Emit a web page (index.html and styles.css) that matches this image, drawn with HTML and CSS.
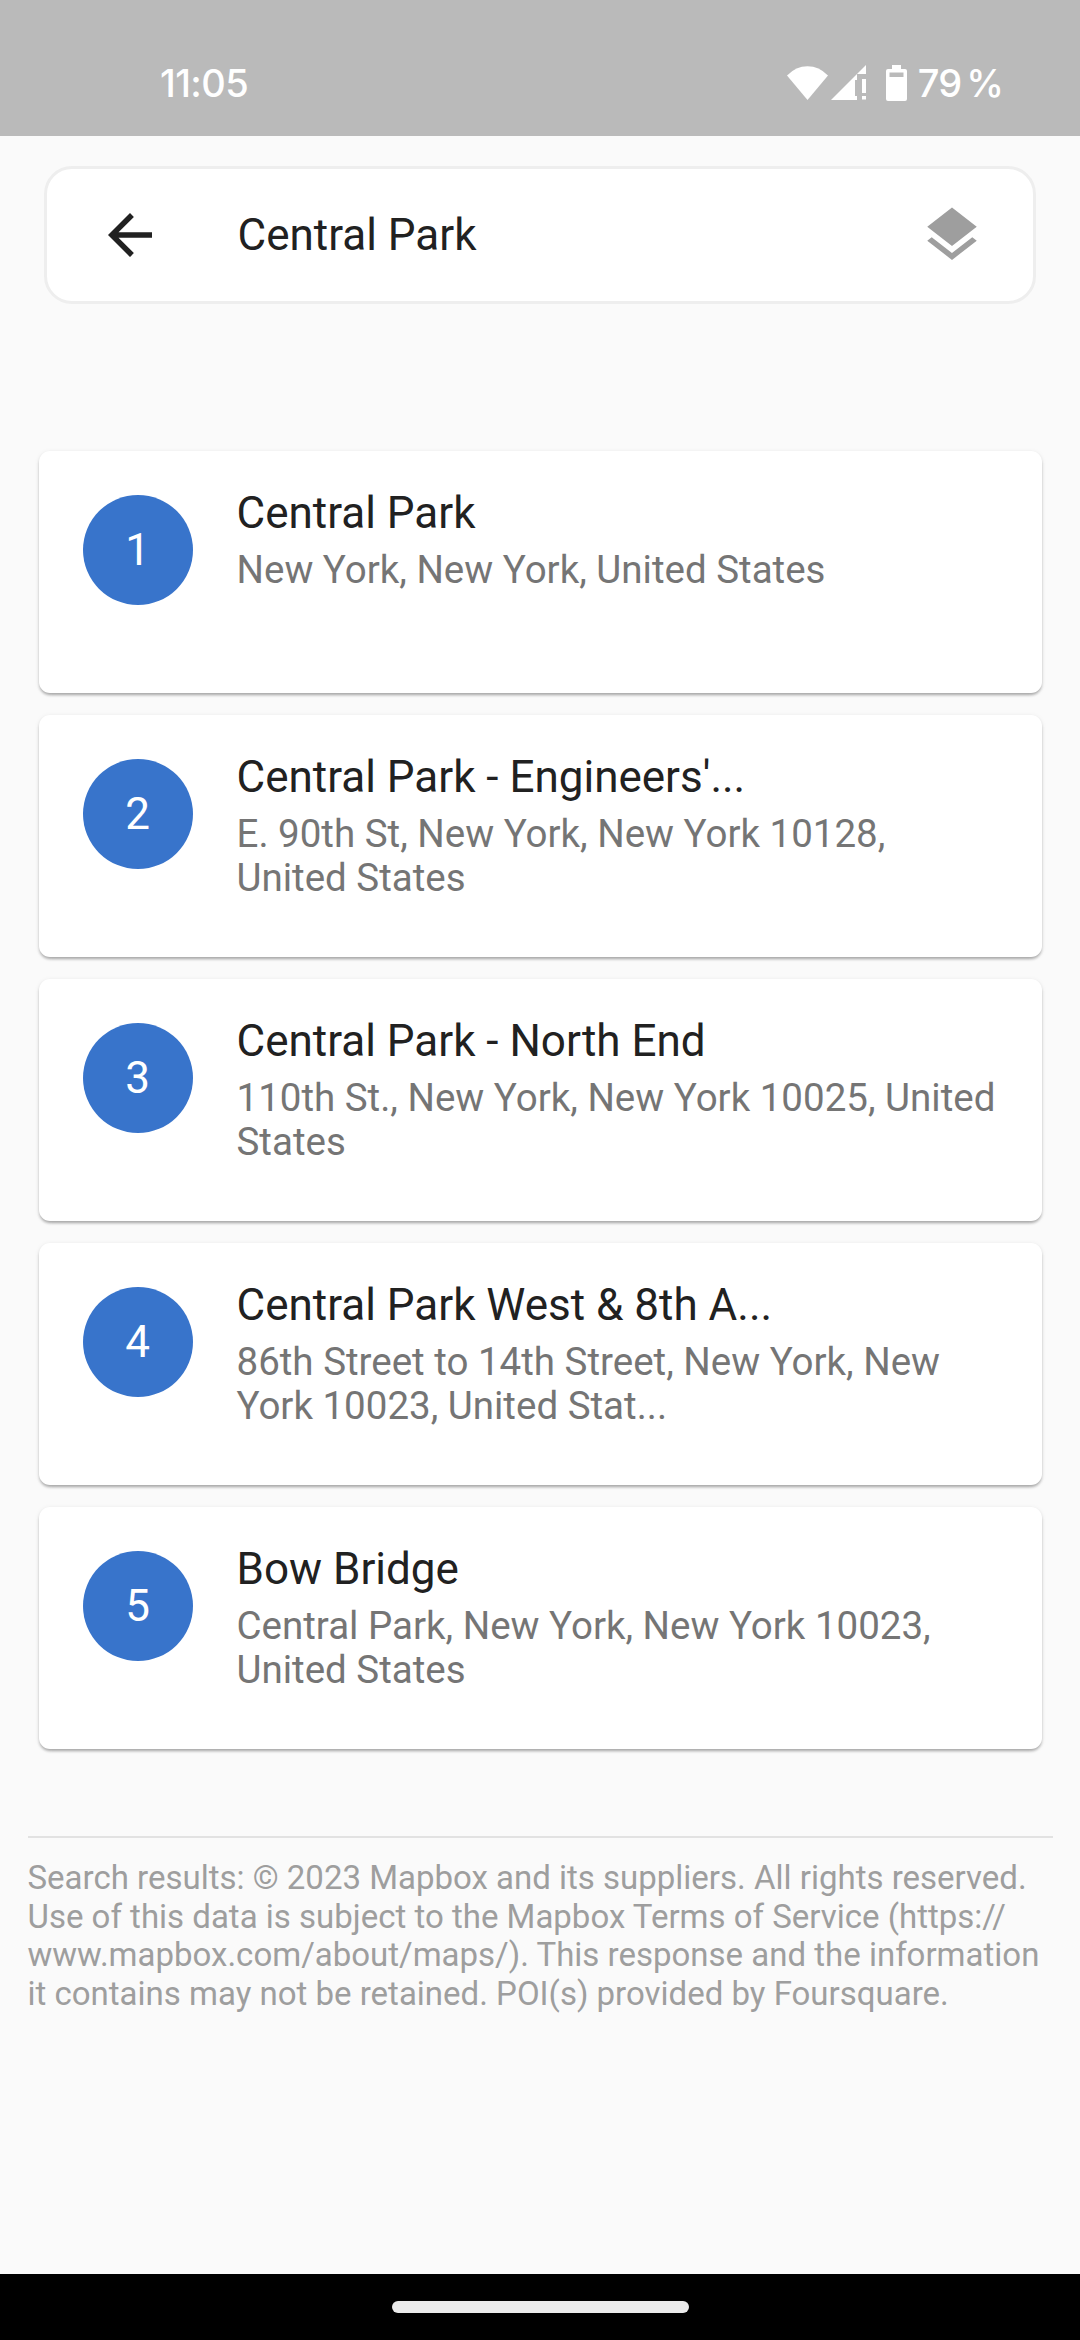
FILE: index.html
```html
<!DOCTYPE html>
<html lang="en">
<head>
<meta charset="utf-8">
<title>Search results</title>
<link rel="stylesheet" href="styles.css">
</head>
<body>
<header class="status-bar">
  <span class="clock">11:05</span>
  <div class="status-icons">
    <svg class="wifi" width="41" height="34" viewBox="0 0 41 34"><path d="M20.5 34 0 9.500Q9 .3 20.500 .3T41 9.500Z"/></svg>
    <svg class="signal" width="35" height="35" viewBox="0 0 35 35"><path d="M35 0V9H26V15H24V31H26V35H0Z"/><path d="M31 14h4v14h-4zM31 31h4v3.500h-4z"/></svg>
    <svg class="battery" width="21" height="36" viewBox="0 0 21 36"><path fill-rule="evenodd" d="M6 0h9v4h4q2 0 2 2v28q0 2-2 2H2q-2 0-2-2V6q0-2 2-2h4zM3.500 7.500v4.500h14V7.500z"/></svg>
    <span class="charge">79 %</span>
  </div>
</header>
<main class="content">
  <div class="search-bar">
    <svg class="back" width="66" height="66" viewBox="0 0 24 24"><path d="M20 11H7.830l5.590-5.590L12 4l-8 8 8 8 1.410-1.410L7.830 13H20v-2z"/></svg>
    <span class="query">Central Park</span>
    <svg class="layers" width="66" height="66" viewBox="0 0 24 24"><path d="M11.990 18.540l-7.370-5.730L3 14.070l9 7 9-7-1.630-1.270-7.380 5.740zM12 16l7.360-5.730L21 9l-9-7-9 7 1.630 1.270L12 16z"/></svg>
  </div>
  <div class="results">
    <article class="card"><div class="badge">1</div><div class="place"><h2 class="name">Central Park</h2><p class="address">New York, New York, United States</p></div></article>
    <article class="card"><div class="badge">2</div><div class="place"><h2 class="name">Central Park - Engineers'...</h2><p class="address">E. 90th St, New York, New York 10128,<br>United States</p></div></article>
    <article class="card"><div class="badge">3</div><div class="place"><h2 class="name">Central Park - North End</h2><p class="address">110th St., New York, New York 10025, United<br>States</p></div></article>
    <article class="card"><div class="badge">4</div><div class="place"><h2 class="name">Central Park West &amp; 8th A...</h2><p class="address">86th Street to 14th Street, New York, New<br>York 10023, United Stat...</p></div></article>
    <article class="card"><div class="badge">5</div><div class="place"><h2 class="name">Bow Bridge</h2><p class="address">Central Park, New York, New York 10023,<br>United States</p></div></article>
  </div>
  <p class="attribution">Search results: © 2023 Mapbox and its suppliers. All rights reserved.<br>Use of this data is subject to the Mapbox Terms of Service (https://<br>www.mapbox.com/about/maps/). This response and the information<br>it contains may not be retained. POI(s) provided by Foursquare.</p>
</main>
<footer class="nav-bar"><div class="handle"></div></footer>
</body>
</html>
```
FILE: styles.css
```css
* { box-sizing: border-box; margin: 0; }
body {
  width: 1080px;
  height: 2340px;
  display: flex;
  flex-direction: column;
  background: #fafafa;
  color: #212121;
  font-family: Roboto, sans-serif;
  overflow: hidden;
}
.status-bar {
  height: 136px;
  padding: 29px 77px 0 160px;
  display: flex;
  align-items: center;
  justify-content: space-between;
  background: #bababa;
  color: #fff;
  font: 500 38px/44px Inter, sans-serif;
}
.clock { letter-spacing: -0.6px; }
.status-icons { display: flex; align-items: center; }
.status-icons svg { fill: #fff; }
.signal { margin-left: 3px; }
.battery { margin: 0 11px 0 20px; }
.charge { letter-spacing: -1px; word-spacing: -4px; }
.content { flex: 1; display: flex; flex-direction: column; }
.search-bar {
  height: 138px;
  margin: 30px 44px 0;
  padding: 0 48px;
  display: flex;
  align-items: center;
  border: 3px solid #eee;
  border-radius: 28px;
  background: #fff;
}
.back { fill: #212121; margin-left: 2px; }
.query { flex: 1; margin-left: 74.500px; font-size: 44px; line-height: 52px; }
.layers { fill: #9e9e9e; }
.results {
  margin: 147px 38.500px 0;
  display: flex;
  flex-direction: column;
  gap: 22px;
}
.card {
  height: 242px;
  padding: 44px;
  display: flex;
  gap: 44px;
  border-radius: 11px;
  background: #fff;
  box-shadow: 0 3px 3px -1px rgba(0,0,0,.2), 0 2px 3px rgba(0,0,0,.12), 0 1px 5px rgba(0,0,0,.08);
}
.badge {
  width: 110px;
  height: 110px;
  flex: none;
  border-radius: 50%;
  background: #3874cb;
  color: #fff;
  font-size: 44px;
  line-height: 110px;
  text-align: center;
}
.place { white-space: nowrap; margin-top: -8px; }
.name { font-size: 44px; line-height: 52px; font-weight: 400; }
.address { margin-top: 9px; font-size: 38.500px; line-height: 44px; color: #757575; }
.attribution {
  margin: 87px 27.500px 0;
  padding-top: 21px;
  border-top: 2px solid #e2e2e2;
  color: #9e9e9e;
  font-size: 33px;
  line-height: 38.500px;
  white-space: nowrap;
}
.nav-bar {
  height: 66px;
  padding-top: 27px;
  background: #000;
}
.handle {
  width: 297px;
  height: 12px;
  margin: 0 auto;
  border-radius: 6px;
  background: #ebebeb;
}
```
